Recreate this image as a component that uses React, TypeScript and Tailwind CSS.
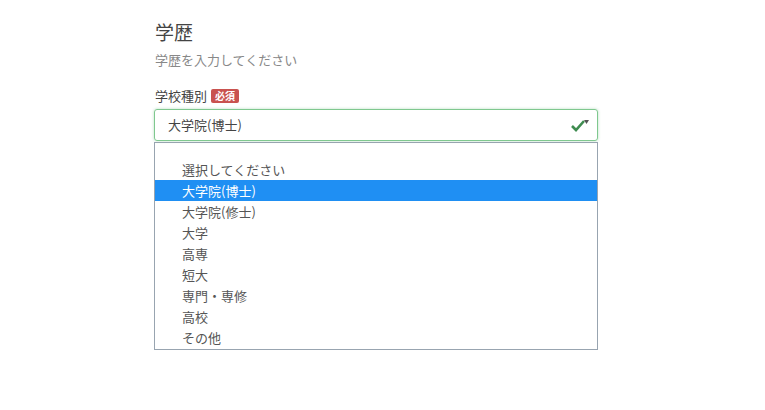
const options = [
  "選択してください",
  "大学院(博士)",
  "大学院(修士)",
  "大学",
  "高専",
  "短大",
  "専門・専修",
  "高校",
  "その他",
];

export default function App() {
  const selected = 1;
  return (
    <div className="w-[765px] h-[410px] bg-white font-['Noto_Sans_CJK_JP','Noto_Sans',sans-serif] text-[#555]">
      <div className="pl-[154px] pt-[18px] w-[598px] flex flex-col">
        {/* 見出し */}
        <h2 className="pl-[1px] text-[19px] leading-[28px] text-[#444]">学歴</h2>
        <p className="pl-[1px] mt-[5px] text-[13px] leading-[18px] text-[#888]">
          学歴を入力してください
        </p>

        {/* ラベル */}
        <div className="mt-[18px] flex items-center gap-[4px] pl-[1px]">
          <span className="text-[13px] leading-[18px] text-[#444]">学校種別</span>
          <span className="bg-[#c9524f] text-white text-[10px] leading-[14px] font-bold px-[4px] rounded-[2px]">
            必須
          </span>
        </div>

        {/* セレクト */}
        <div className="mt-[4px] h-[32px] border border-[#7fc88f] rounded-[3px] shadow-[0_0_3px_rgba(90,180,110,0.45)] flex items-center justify-between pl-[13px] pr-[7px]">
          <span className="text-[13px] text-[#444]">大学院(博士)</span>
          <svg width="20" height="14" viewBox="0 0 20 14">
            <path d="M2 8 L6 12 L14 3" stroke="#3f8c50" strokeWidth="2.6" fill="none" />
            <path d="M14 2 L19 2 L16.5 6 Z" fill="#555" />
          </svg>
        </div>

        {/* ドロップダウン */}
        <div className="mt-[1px] border border-[#98a4b0] pt-[16px] pb-[1px]">
          {options.map((o, i) => (
            <div
              key={i}
              className={
                "h-[21px] pl-[27px] flex items-center text-[13px] " +
                (i === selected ? "bg-[#1f8ff3] text-white" : "text-[#555]")
              }
            >
              {o}
            </div>
          ))}
        </div>
      </div>
    </div>
  );
}
